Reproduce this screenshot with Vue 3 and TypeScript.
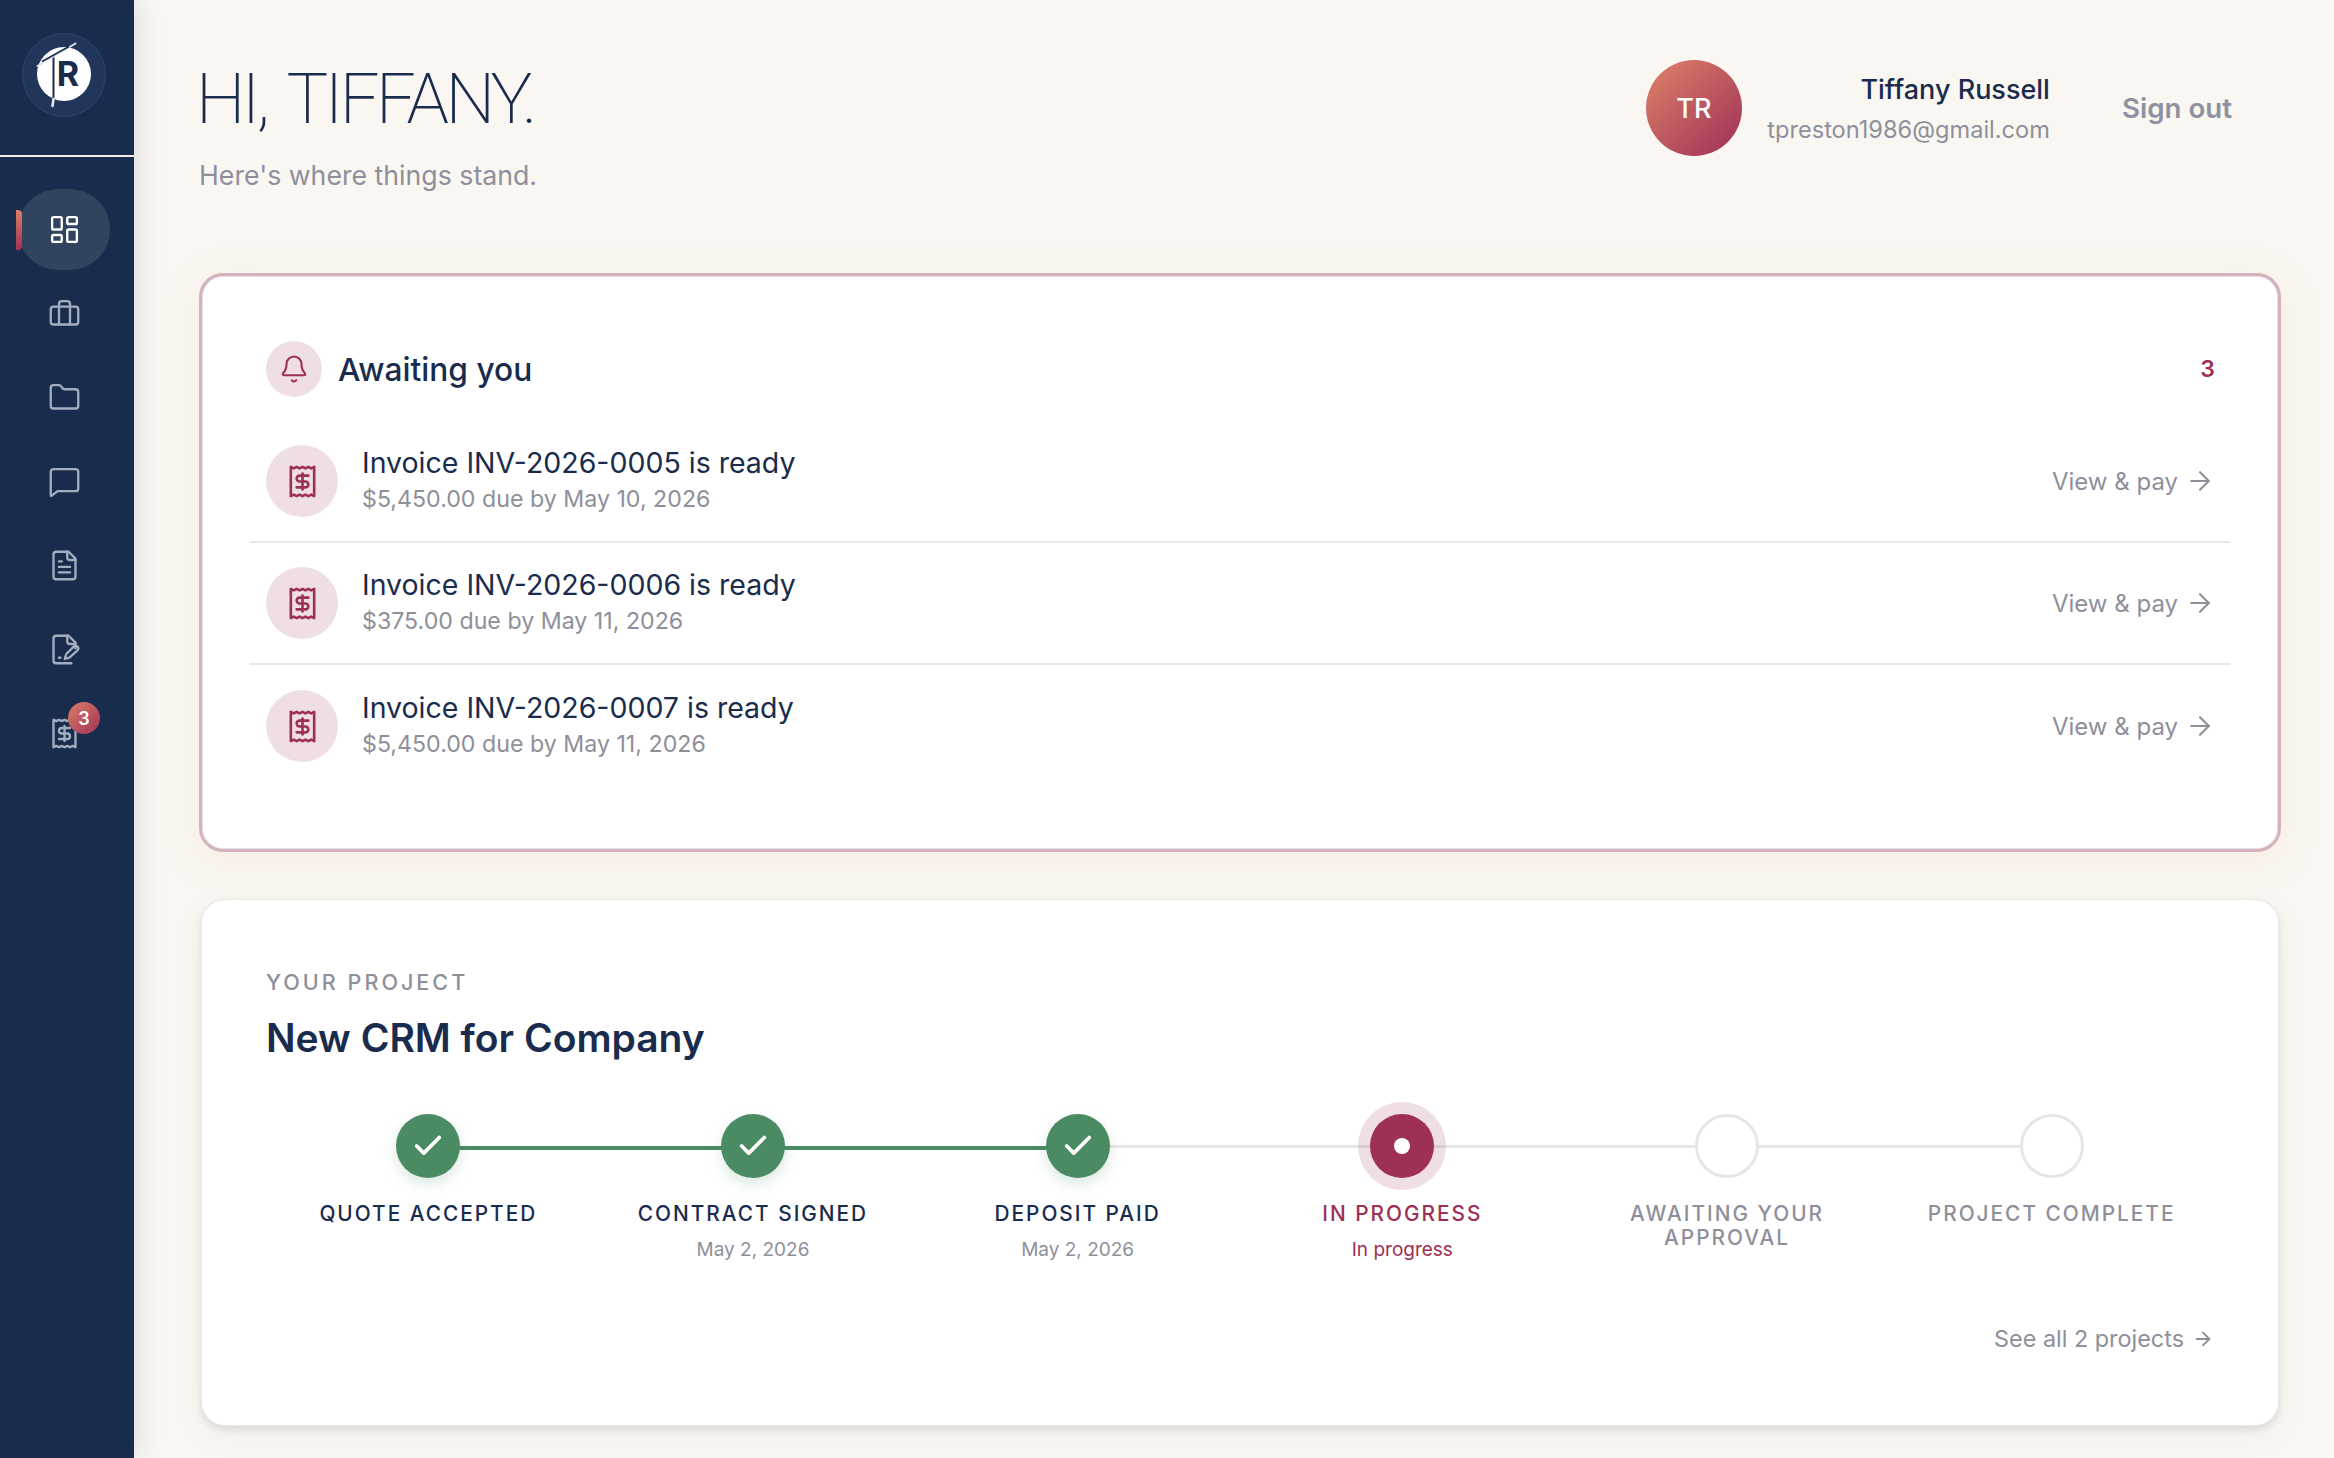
<script setup lang="ts">
interface Invoice { title: string; sub: string }
interface Step { label: string; date?: string; state: 'done' | 'current' | 'todo' }

const invoices: Invoice[] = [
  { title: 'Invoice INV-2026-0005 is ready', sub: '$5,450.00 due by May 10, 2026' },
  { title: 'Invoice INV-2026-0006 is ready', sub: '$375.00 due by May 11, 2026' },
  { title: 'Invoice INV-2026-0007 is ready', sub: '$5,450.00 due by May 11, 2026' },
]
const steps: Step[] = [
  { label: 'QUOTE ACCEPTED', state: 'done' },
  { label: 'CONTRACT SIGNED', date: 'May 2, 2026', state: 'done' },
  { label: 'DEPOSIT PAID', date: 'May 2, 2026', state: 'done' },
  { label: 'IN PROGRESS', date: 'In progress', state: 'current' },
  { label: 'AWAITING YOUR APPROVAL', state: 'todo' },
  { label: 'PROJECT COMPLETE', state: 'todo' },
]
const navIcons: string[][] = [
  ['M4 3h5a1 1 0 0 1 1 1v7a1 1 0 0 1-1 1H4a1 1 0 0 1-1-1V4a1 1 0 0 1 1-1z', 'M15 3h5a1 1 0 0 1 1 1v3a1 1 0 0 1-1 1h-5a1 1 0 0 1-1-1V4a1 1 0 0 1 1-1z', 'M15 12h5a1 1 0 0 1 1 1v7a1 1 0 0 1-1 1h-5a1 1 0 0 1-1-1v-7a1 1 0 0 1 1-1z', 'M4 16h5a1 1 0 0 1 1 1v3a1 1 0 0 1-1 1H4a1 1 0 0 1-1-1v-3a1 1 0 0 1 1-1z'],
  ['M4 7h16a2 2 0 0 1 2 2v9a2 2 0 0 1-2 2H4a2 2 0 0 1-2-2V9a2 2 0 0 1 2-2z', 'M8 20V5a2 2 0 0 1 2-2h4a2 2 0 0 1 2 2v15'],
  ['M20 20a2 2 0 0 0 2-2V8a2 2 0 0 0-2-2h-7.900a2 2 0 0 1-1.690-.9L9.600 3.900A2 2 0 0 0 7.930 3H4a2 2 0 0 0-2 2v13a2 2 0 0 0 2 2z'],
  ['M22 17a2 2 0 0 1-2 2H7l-4.300 3.300a.4.4 0 0 1-.7-.3V5a2 2 0 0 1 2-2h16a2 2 0 0 1 2 2z'],
  ['M15 2H6a2 2 0 0 0-2 2v16a2 2 0 0 0 2 2h12a2 2 0 0 0 2-2V7z', 'M14 2v4a2 2 0 0 0 2 2h4', 'M10 9H8', 'M16 13H8', 'M16 17H8'],
  ['M20 11V7l-5-5H6a2 2 0 0 0-2 2v16a2 2 0 0 0 2 2h11', 'M14 2v4a2 2 0 0 0 2 2h4', 'M8 18h1', 'M21.400 12.600a1.900 1.900 0 0 0-2.700-2.700l-5.200 5.200a2 2 0 0 0-.5.9l-.8 2.900 2.900-.8a2 2 0 0 0 .9-.5z'],
  ['M4 2v20l2-1 2 1 2-1 2 1 2-1 2 1 2-1 2 1V2l-2 1-2-1-2 1-2-1-2 1-2-1-2 1z', 'M16 8h-6a2 2 0 1 0 0 4h4a2 2 0 1 1 0 4H8', 'M12 17.500v-11'],
]
const receipt = navIcons[6]
</script>

<template>
  <div class="shell">
    <aside class="sidebar">
      <div class="logo-wrap">
        <svg class="logo" viewBox="0 0 84 84">
          <circle cx="42" cy="42" r="41.500" fill="#22355a" stroke="#32456a" stroke-width="1" />
          <circle cx="42" cy="41" r="27" fill="#fff" />
          <text x="46" y="53" class="logo-r">R</text>
          <path d="M31.500 23V66" stroke="#1a2c4d" stroke-width="2" />
          <path d="M31.500 66L30.500 73" stroke="#e8ebf0" stroke-width="2.500" stroke-linecap="round" />
          <path d="M15.500 33L53.500 10.500" stroke="#dfe3ea" stroke-width="2" stroke-linecap="round" />
          <path d="M20 28.500L47 13.500" stroke="#1a2c4d" stroke-width="1.500" />
        </svg>
      </div>
      <nav class="nav">
        <div v-for="(icon, i) in navIcons" :key="i" class="nav-item" :class="{ active: i === 0 }">
          <span v-if="i === 0" class="indicator"></span>
          <svg class="nav-icon" viewBox="0 0 24 24" fill="none" stroke="currentColor" stroke-width="1.700" stroke-linecap="round" stroke-linejoin="round">
            <path v-for="d in icon" :key="d" :d="d" />
          </svg>
          <span v-if="i === 6" class="badge">3</span>
        </div>
      </nav>
    </aside>

    <main class="main">
      <header class="top">
        <div>
          <h1 class="hello">HI, TIFFANY.</h1>
          <p class="tagline">Here's where things stand.</p>
        </div>
        <div class="user">
          <div class="avatar">TR</div>
          <div class="who">
            <div class="name">Tiffany Russell</div>
            <div class="email">tpreston1986@gmail.com</div>
          </div>
          <a class="signout">Sign out</a>
        </div>
      </header>

      <section class="card awaiting">
        <div class="await-head">
          <span class="bell">
            <svg viewBox="0 0 24 24" fill="none" stroke="currentColor" stroke-width="1.700" stroke-linecap="round" stroke-linejoin="round">
              <path d="M10.300 21a2 2 0 0 0 3.400 0" />
              <path d="M3.300 15.300A1 1 0 0 0 4 17h16a1 1 0 0 0 .7-1.700C19.400 14 18 12.500 18 8A6 6 0 0 0 6 8c0 4.500-1.400 6-2.700 7.300" />
            </svg>
          </span>
          <h2 class="await-title">Awaiting you</h2>
          <span class="count">3</span>
        </div>
        <div class="rows">
          <div v-for="inv in invoices" :key="inv.title" class="row">
            <span class="row-icon">
              <svg viewBox="0 0 24 24" fill="none" stroke="currentColor" stroke-width="1.800" stroke-linecap="round" stroke-linejoin="round">
                <path v-for="d in receipt" :key="d" :d="d" />
              </svg>
            </span>
            <div class="row-text">
              <div class="row-title">{{ inv.title }}</div>
              <div class="row-sub">{{ inv.sub }}</div>
            </div>
            <a class="row-link">
              View &amp; pay
              <svg viewBox="0 0 24 24" fill="none" stroke="currentColor" stroke-width="1.700" stroke-linecap="round" stroke-linejoin="round">
                <path d="M5 12h14" /><path d="m12 5 7 7-7 7" />
              </svg>
            </a>
          </div>
        </div>
      </section>

      <section class="card project">
        <div class="eyebrow">YOUR PROJECT</div>
        <h2 class="project-title">New CRM for Company</h2>
        <div class="stepper">
          <div v-for="(s, i) in steps" :key="s.label" class="step" :class="s.state">
            <span v-if="i < steps.length - 1" class="link" :class="{ green: i < 2 }"></span>
            <span class="dot">
              <svg v-if="s.state === 'done'" viewBox="0 0 24 24" fill="none" stroke="#fff" stroke-width="2.600" stroke-linecap="round" stroke-linejoin="round">
                <path d="M20 6 9 17l-5-5" />
              </svg>
              <span v-if="s.state === 'current'" class="pip"></span>
            </span>
            <div class="step-label">{{ s.label }}</div>
            <div v-if="s.date" class="step-date">{{ s.date }}</div>
          </div>
        </div>
        <div class="foot">
          <a class="see-all">See all 2 projects
            <svg viewBox="0 0 24 24" fill="none" stroke="currentColor" stroke-width="2" stroke-linecap="round" stroke-linejoin="round">
              <path d="M5 12h14" /><path d="m12 5 7 7-7 7" />
            </svg>
          </a>
        </div>
      </section>
    </main>
  </div>
</template>

<style>
html, body { margin: 0; background: #faf7f2; }
</style>

<style scoped>
.shell {
  display: flex;
  height: 1458px;
  overflow: hidden;
  background: #faf7f2;
  font-family: "Inter", "Liberation Sans", sans-serif;
  color: #1a2c4d;
}
.sidebar {
  width: 134px;
  flex: none;
  background: #1a2c4d;
  box-shadow: 4px 0 24px rgba(26, 44, 77, 0.12);
  position: relative;
  z-index: 1;
}
.logo-wrap {
  height: 157px;
  border-bottom: 2px solid #f1eee9;
  display: flex;
  justify-content: center;
  padding: 33px 6px 0 0;
  box-sizing: border-box;
}
.logo { width: 84px; height: 84px; display: block; }
.logo-r { font: 700 34px "Inter", sans-serif; fill: #1a2c4d; text-anchor: middle; }
.nav {
  display: flex;
  flex-direction: column;
  gap: 3px;
  padding: 32px 24px 0 18px;
}
.nav-item {
  height: 81px;
  border-radius: 40px;
  display: flex;
  align-items: center;
  justify-content: center;
  color: #a3adbf;
  position: relative;
}
.nav-item.active { background: #30435f; color: #fff; }
.indicator {
  position: absolute;
  left: -2px;
  top: 21px;
  width: 6px;
  height: 40px;
  border-radius: 0 4px 4px 0;
  background: linear-gradient(180deg, #dc7f68, #a03159);
}
.nav-icon { width: 33px; height: 33px; }
.badge {
  position: absolute;
  left: 50px;
  top: 9px;
  width: 32px;
  height: 32px;
  border-radius: 50%;
  background: linear-gradient(135deg, #dc7f68, #a03159);
  color: #fff;
  font-size: 18px;
  font-weight: 600;
  display: flex;
  align-items: center;
  justify-content: center;
}
.main {
  flex: 1;
  min-width: 0;
  padding: 0 53px 0 65px;
}
.top {
  height: 273px;
  display: flex;
  justify-content: space-between;
  align-items: flex-start;
  box-sizing: border-box;
}
.hello {
  margin: 59px 0 0 -3px;
  font-family: "Roboto", sans-serif;
  font-size: 70px;
  font-weight: 200;
  line-height: 80px;
  letter-spacing: -3.500px;
  word-spacing: 8px;
}
.tagline {
  margin: 18px 0 0;
  font-size: 26.700px;
  line-height: 36px;
  color: #8e8f9a;
}
.user {
  display: flex;
  align-items: center;
  margin-top: 60px;
  padding-right: 49px;
}
.avatar {
  width: 96px;
  height: 96px;
  border-radius: 50%;
  background: linear-gradient(135deg, #de8369, #9e2f57);
  color: #fff;
  font-size: 27px;
  font-weight: 500;
  display: flex;
  align-items: center;
  justify-content: center;
}
.who { width: 308px; text-align: right; padding-top: 4px; }
.name { font-size: 27px; line-height: 36px; font-weight: 500; }
.email { font-size: 23.600px; line-height: 36px; margin-top: 4px; color: #8e8f9a; }
.signout {
  margin-left: 72px;
  font-size: 27.700px;
  font-weight: 600;
  color: #8e919f;
}
.card {
  background: #fff;
  border-radius: 24px;
  box-sizing: border-box;
}
.awaiting {
  height: 579px;
  border: 3px solid #d4b2bb;
  padding: 65px 64px 0;
  box-shadow: 0 8px 40px rgba(222, 160, 110, 0.12), inset 0 0 0 1px #eadfe4;
}
.await-head {
  height: 56px;
  display: flex;
  align-items: center;
  gap: 16px;
}
.bell {
  width: 56px;
  height: 56px;
  border-radius: 50%;
  background: #efdfe5;
  color: #9e2f55;
  display: flex;
  align-items: center;
  justify-content: center;
}
.bell svg { width: 30px; height: 30px; }
.await-title { margin: 0; font-size: 31.700px; font-weight: 500; flex: 1; }
.count { font-size: 23px; font-weight: 600; color: #9e2f55; margin-right: -1px; }
.rows { margin: 24px -16px 0; }
.row {
  height: 122px;
  padding: 0 16px;
  box-sizing: border-box;
  border-bottom: 2px solid #e9e9e9;
  display: flex;
  align-items: center;
  gap: 24px;
}
.row:last-child { border-bottom: 0; }
.row-icon {
  width: 72px;
  height: 72px;
  border-radius: 50%;
  background: #efdfe5;
  color: #9e2f55;
  display: flex;
  align-items: center;
  justify-content: center;
}
.row-icon svg { width: 35px; height: 35px; }
.row-text { flex: 1; min-width: 0; }
.row-title { font-size: 28.500px; line-height: 36px; }
.row-sub { font-size: 23.200px; line-height: 36px; color: #8e8f9a; }
.row-link {
  display: flex;
  align-items: center;
  gap: 7px;
  font-size: 24px;
  color: #8e8f9a;
  margin-right: -1px;
}
.row-link svg { width: 30px; height: 30px; }
.project {
  margin: 47px 2px 0;
  height: 527px;
  padding: 67px 64px 0;
  border: 1px solid #e8e8e8;
  box-shadow: 0 4px 8px rgba(0, 0, 0, 0.1), 0 10px 40px rgba(0, 0, 0, 0.03);
}
.eyebrow { font-size: 21.600px; line-height: 30px; letter-spacing: 3px; color: #8e8f9a; font-weight: 500; }
.project-title { margin: 15px 0 0; font-size: 39px; line-height: 52px; font-weight: 560; }
.stepper {
  display: grid;
  grid-template-columns: repeat(6, 1fr);
  margin-top: 50px;
}
.step {
  position: relative;
  display: flex;
  flex-direction: column;
  align-items: center;
  text-align: center;
}
.link {
  position: absolute;
  left: 50%;
  width: 100%;
  top: 31px;
  height: 3px;
  background: #e6e6e6;
}
.link.green { top: 32px; height: 4px; background: #4b8b63; }
.dot {
  width: 64px;
  height: 64px;
  border-radius: 50%;
  box-sizing: border-box;
  position: relative;
  display: flex;
  align-items: center;
  justify-content: center;
  background: #fff;
}
.done .dot { background: #4b8b63; box-shadow: 0 6px 14px rgba(75, 139, 99, 0.2); }
.dot svg { width: 34px; height: 34px; }
.current .dot { background: #9e2f55; box-shadow: 0 0 0 12px rgba(158, 47, 85, 0.16); }
.todo .dot { border: 3px solid #e6e6e6; }
.pip { width: 16px; height: 16px; border-radius: 50%; background: #fff; }
.step-label {
  margin-top: 24px;
  max-width: 280px;
  font-size: 20.800px;
  line-height: 24px;
  letter-spacing: 2px;
  font-weight: 500;
  color: #1a2c4d;
}
.current .step-label { color: #9e2f55; }
.todo .step-label { color: #8e8f9a; }
.step-date { margin-top: 10px; font-size: 19px; line-height: 28px; color: #8e8f9a; }
.current .step-date { color: #9e2f55; }
.foot { display: flex; justify-content: flex-end; margin-top: 60px; }
.see-all {
  display: flex;
  align-items: center;
  gap: 8px;
  font-size: 23.400px;
  color: #8e8f9a;
}
.see-all svg { width: 22px; height: 22px; }
</style>
